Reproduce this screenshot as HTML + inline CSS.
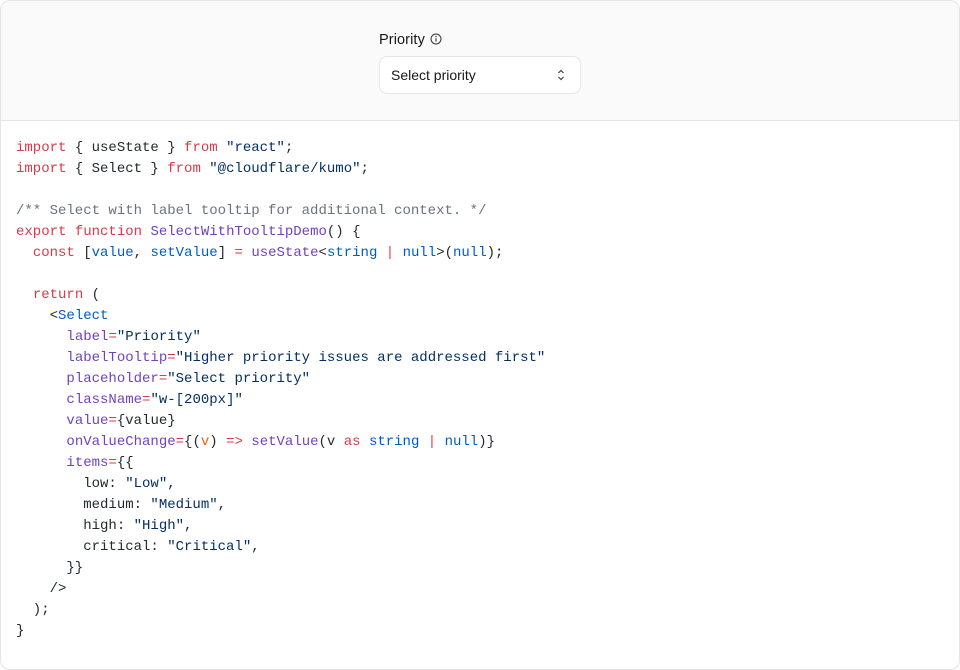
<!DOCTYPE html>
<html><head><style>
*{margin:0;padding:0;box-sizing:border-box}
html,body{width:960px;height:657px;background:#fff;font-family:"Liberation Sans",sans-serif;overflow:hidden}
.card{position:absolute;left:0;top:0;width:960px;height:670px;border:1px solid #e5e5e5;border-radius:10px;overflow:hidden}
.top{height:120px;background:#fafafa;border-bottom:1px solid #e5e5e5;position:relative}
.lbl{position:absolute;left:378px;top:31px;font-size:14.5px;color:#171717;font-weight:500;letter-spacing:0.1px}
.sel{position:absolute;left:378px;top:55px;width:202px;height:38px;border:1px solid #e5e5e5;border-radius:8px;background:#fff;font-size:14px;color:#171717;padding:10px 11px;line-height:17px}
pre{position:absolute;left:15px;top:137px;font-family:"Liberation Mono",monospace;font-size:14px;line-height:21px;color:#24292e}
.k{color:#d73a49}.s{color:#032f62}.c{color:#6a737d}.f{color:#6f42c1}.b{color:#005cc5}.o{color:#e36209}
</style></head><body>
<div class="card">
<div class="top">
<div class="lbl">Priority <svg width="12" height="12" viewBox="0 0 12 12" style="vertical-align:-1px;margin-left:1px"><circle cx="6" cy="6" r="5" fill="none" stroke="#333" stroke-width="1"/><line x1="6" y1="5.3" x2="6" y2="8.6" stroke="#333" stroke-width="1.1"/><circle cx="6" cy="3.6" r=".7" fill="#333"/></svg></div>
<div class="sel">Select priority<svg width="10" height="14" viewBox="0 0 10 14" style="position:absolute;right:14px;top:11px"><path d="M2.5 5 L5 2.5 L7.5 5 M2.5 9 L5 11.5 L7.5 9" fill="none" stroke="#444" stroke-width="1.2"/></svg></div>
</div>
<pre><span class="k">import</span> { useState } <span class="k">from</span> <span class="s">"react"</span>;
<span class="k">import</span> { Select } <span class="k">from</span> <span class="s">"@cloudflare/kumo"</span>;

<span class="c">/** Select with label tooltip for additional context. */</span>
<span class="k">export</span> <span class="k">function</span> <span class="f">SelectWithTooltipDemo</span>() {
  <span class="k">const</span> [<span class="b">value</span>, <span class="b">setValue</span>] <span class="k">=</span> <span class="f">useState</span>&lt;<span class="b">string</span> <span class="k">|</span> <span class="b">null</span>&gt;(<span class="b">null</span>);

  <span class="k">return</span> (
    &lt;<span class="b">Select</span>
      <span class="f">label</span><span class="k">=</span><span class="s">"Priority"</span>
      <span class="f">labelTooltip</span><span class="k">=</span><span class="s">"Higher priority issues are addressed first"</span>
      <span class="f">placeholder</span><span class="k">=</span><span class="s">"Select priority"</span>
      <span class="f">className</span><span class="k">=</span><span class="s">"w-[200px]"</span>
      <span class="f">value</span><span class="k">=</span>{value}
      <span class="f">onValueChange</span><span class="k">=</span>{(<span class="o">v</span>) <span class="k">=&gt;</span> <span class="f">setValue</span>(v <span class="k">as</span> <span class="b">string</span> <span class="k">|</span> <span class="b">null</span>)}
      <span class="f">items</span><span class="k">=</span>{{
        low: <span class="s">"Low"</span>,
        medium: <span class="s">"Medium"</span>,
        high: <span class="s">"High"</span>,
        critical: <span class="s">"Critical"</span>,
      }}
    /&gt;
  );
}</pre>
</div>
</body></html>
